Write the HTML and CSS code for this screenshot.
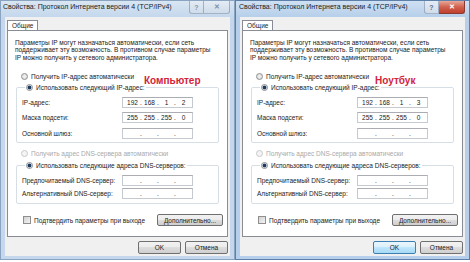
FILE: index.html
```html
<!DOCTYPE html>
<html>
<head>
    <title>Свойства: Протокол Интернета версии 4 (TCP/IPv4)</title>
    <link rel="stylesheet" href="styles.css">
</head>
<body>
    <div class="desktop">
        <!-- Компьютер -->
        <div class="dialog inactive">
            <div class="titlebar">
                <span class="title">Свойства: Протокол Интернета версии 4 (TCP/IPv4)</span>
                <div class="caption-buttons">
                    <span class="cap-btn help">?</span>
                    <span class="cap-btn close">✕</span>
                </div>
            </div>
            <div class="client">
                <div class="tabs"><div class="tab">Общие</div></div>
                <div class="panel">
                    <span class="note">Компьютер</span>
                    <p class="intro">Параметры IP могут назначаться автоматически, если сеть<br>поддерживает эту возможность. В противном случае параметры<br>IP можно получить у сетевого администратора.</p>
                    <div class="option"><span class="radio"></span>Получить IP-адрес автоматически</div>
                    <fieldset class="group ip-group">
                        <legend class="option"><span class="radio checked"></span>Использовать следующий IP-адрес:</legend>
                        <div class="field"><span class="field-label">IP-адрес:</span><div class="ip-box" data-ip="192.168.1.2"></div></div>
                        <div class="field"><span class="field-label">Маска подсети:</span><div class="ip-box" data-ip="255.255.255.0"></div></div>
                        <div class="field"><span class="field-label">Основной шлюз:</span><div class="ip-box" data-ip=""></div></div>
                    </fieldset>
                    <div class="option disabled dns-auto"><span class="radio"></span>Получить адрес DNS-сервера автоматически</div>
                    <fieldset class="group dns-group">
                        <legend class="option"><span class="radio checked"></span>Использовать следующие адреса DNS-серверов:</legend>
                        <div class="field"><span class="field-label">Предпочитаемый DNS-сервер:</span><div class="ip-box" data-ip=""></div></div>
                        <div class="field"><span class="field-label">Альтернативный DNS-сервер:</span><div class="ip-box" data-ip=""></div></div>
                    </fieldset>
                    <div class="confirm-row">
                        <span class="checkbox"></span>
                        <span class="confirm-text">Подтвердить параметры при выходе</span>
                        <button class="win-button advanced">Дополнительно...</button>
                    </div>
                </div>
                <div class="footer">
                    <button class="win-button">OK</button>
                    <button class="win-button">Отмена</button>
                </div>
            </div>
        </div>

        <!-- Ноутбук -->
        <div class="dialog active">
            <div class="titlebar">
                <span class="title">Свойства: Протокол Интернета версии 4 (TCP/IPv4)</span>
                <div class="caption-buttons">
                    <span class="cap-btn help">?</span>
                    <span class="cap-btn close">✕</span>
                </div>
            </div>
            <div class="client">
                <div class="tabs"><div class="tab">Общие</div></div>
                <div class="panel">
                    <span class="note note-laptop">Ноутбук</span>
                    <p class="intro">Параметры IP могут назначаться автоматически, если сеть<br>поддерживает эту возможность. В противном случае параметры<br>IP можно получить у сетевого администратора.</p>
                    <div class="option"><span class="radio"></span>Получить IP-адрес автоматически</div>
                    <fieldset class="group ip-group">
                        <legend class="option"><span class="radio checked"></span>Использовать следующий IP-адрес:</legend>
                        <div class="field"><span class="field-label">IP-адрес:</span><div class="ip-box" data-ip="192.168.1.3"></div></div>
                        <div class="field"><span class="field-label">Маска подсети:</span><div class="ip-box" data-ip="255.255.255.0"></div></div>
                        <div class="field"><span class="field-label">Основной шлюз:</span><div class="ip-box" data-ip=""></div></div>
                    </fieldset>
                    <div class="option disabled dns-auto"><span class="radio"></span>Получить адрес DNS-сервера автоматически</div>
                    <fieldset class="group dns-group">
                        <legend class="option"><span class="radio checked"></span>Использовать следующие адреса DNS-серверов:</legend>
                        <div class="field"><span class="field-label">Предпочитаемый DNS-сервер:</span><div class="ip-box" data-ip=""></div></div>
                        <div class="field"><span class="field-label">Альтернативный DNS-сервер:</span><div class="ip-box" data-ip=""></div></div>
                    </fieldset>
                    <div class="confirm-row">
                        <span class="checkbox"></span>
                        <span class="confirm-text">Подтвердить параметры при выходе</span>
                        <button class="win-button advanced">Дополнительно...</button>
                    </div>
                </div>
                <div class="footer">
                    <button class="win-button default">OK</button>
                    <button class="win-button">Отмена</button>
                </div>
            </div>
        </div>
    </div>

    <script>
        // заполняем поля IP-адресов по четырём октетам
        document.querySelectorAll('.ip-box').forEach(box => {
            const parts = box.dataset.ip ? box.dataset.ip.split('.') : ['', '', '', ''];
            box.innerHTML = parts
                .map(p => `<span class="octet">${p}</span>`)
                .join('<span class="dot">.</span>');
        });
    </script>
</body>
</html>
```

FILE: styles.css
```css
body {
    margin: 0;
    background: #ffffff;
    font-family: "Liberation Sans", Arial, sans-serif;
    font-size: 6.5px;
    color: #222;
}
.desktop {
    display: flex;
    width: 470px;
    height: 262px;
    overflow: hidden;
}
.dialog {
    width: 233px;
    height: 258px;
    flex: none;
    display: flex;
    flex-direction: column;
    border: 1px solid #8aa3c0;
    background: #c4d7ec;
}
.dialog.active {
    border-color: #5d80aa;
    background: #b6cfea;
}
.titlebar {
    height: 16px;
    display: flex;
    justify-content: space-between;
    align-items: flex-start;
    background: linear-gradient(#d9e6f3, #c4d7ec);
}
.active .titlebar {
    background: linear-gradient(#cfe0f2, #b6cfea);
}
.title {
    padding: 1px 0 0 2px;
    font-size: 7px;
    line-height: 10px;
    color: #1b1b1b;
}
.active .title {
    padding-left: 3px;
}
.caption-buttons {
    display: flex;
    margin-right: 4px;
}
.cap-btn {
    height: 12px;
    display: flex;
    align-items: center;
    justify-content: center;
    font-size: 7px;
    font-weight: bold;
    color: #8493a6;
    border: 1px solid rgba(90, 110, 140, 0.45);
    border-top: none;
    background: linear-gradient(#e4ecf5, #cfdcea);
}
.cap-btn.help {
    width: 13px;
    border-radius: 0 0 0 3px;
}
.cap-btn.close {
    width: 25px;
    border-left: none;
    border-radius: 0 0 3px 0;
}
.active .cap-btn.help {
    color: #5b6f88;
}
.active .cap-btn.close {
    color: #ffffff;
    border-color: #8a3a30;
    background: linear-gradient(#e8a898, #d0614f 50%, #c0402c);
}
.client {
    flex: 1;
    margin: 0 4px 3px;
    padding: 3px 2px 0;
    background: #f0f0f0;
    display: flex;
    flex-direction: column;
}
.tabs {
    display: flex;
    height: 10px;
}
.tab {
    padding: 0 4px;
    line-height: 9px;
    border: 1px solid #898c95;
    border-bottom: none;
    background: #ffffff;
}
.panel {
    position: relative;
    height: 197px;
    padding: 8px 0 0 7px;
    border: 1px solid #898c95;
    background: #ffffff;
}
.intro {
    margin: 0;
    line-height: 7.3px;
}
.option {
    display: flex;
    align-items: center;
    height: 9px;
}
.panel > .option {
    margin-top: 11px;
    padding-left: 6px;
}
.panel > .dns-auto {
    margin-top: 6px;
}
.option.disabled {
    color: #a9a9a9;
}
.radio {
    width: 5px;
    height: 5px;
    margin-right: 3px;
    border: 1px solid #8e8f8f;
    border-radius: 50%;
    background: radial-gradient(circle, #f4f4f4, #d6d6d6);
}
.radio.checked {
    background: radial-gradient(circle, #1d3a60 0 1.6px, #dde4ec 2.2px);
}
.disabled .radio {
    border-color: #c9c9c9;
    background: #f4f4f4;
}
.group {
    margin: 2px 8px 0 1px;
    padding: 5px 0 3px 5px;
    border: 1px solid #d5dfe5;
    border-radius: 2px;
}
.dns-group {
    margin-top: 3px;
    padding-bottom: 4px;
}
.group legend {
    margin-left: 3px;
    padding: 0 1px;
}
.field {
    display: flex;
    align-items: center;
    height: 11px;
}
.ip-group .field + .field {
    margin-top: 4.5px;
}
.dns-group .field + .field {
    margin-top: 2.5px;
}
.field-label {
    width: 100px;
}
.ip-box {
    width: 66px;
    height: 9px;
    display: flex;
    align-items: center;
    padding: 0 1px 0 2px;
    border: 1px solid #c5c9d0;
    border-top-color: #abadb3;
    background: #ffffff;
}
.octet {
    width: 15px;
    text-align: center;
}
.dot {
    width: 2px;
    text-align: center;
}
.confirm-row {
    display: flex;
    align-items: center;
    height: 12px;
    margin: 10px 4px 0 8px;
}
.checkbox {
    width: 6px;
    height: 6px;
    margin-right: 3px;
    border: 1px solid #8f8f8f;
    background: linear-gradient(135deg, #d2d2d2, #f4f4f4);
}
.confirm-text {
    flex: 1;
}
.win-button {
    height: 12px;
    padding: 0;
    font-family: inherit;
    font-size: 6.5px;
    color: #222;
    border: 1px solid #707070;
    border-radius: 2px;
    background: linear-gradient(#f2f2f2 0%, #ebebeb 50%, #dddddd 50%, #cfcfcf 100%);
}
.win-button.advanced {
    width: 66px;
}
.win-button.default {
    border-color: #3c7fb1;
    background: linear-gradient(#eaf6fd 0%, #d9f0fc 50%, #bee6fd 50%, #a7d9f5 100%);
}
.footer {
    display: flex;
    justify-content: flex-end;
    gap: 4px;
    margin-top: 4px;
}
.footer .win-button {
    width: 43px;
    height: 13px;
}
.note {
    position: absolute;
    left: 136px;
    top: 44px;
    font-size: 10px;
    font-weight: bold;
    color: #d3243b;
}
.note-laptop {
    left: 132px;
}
```
